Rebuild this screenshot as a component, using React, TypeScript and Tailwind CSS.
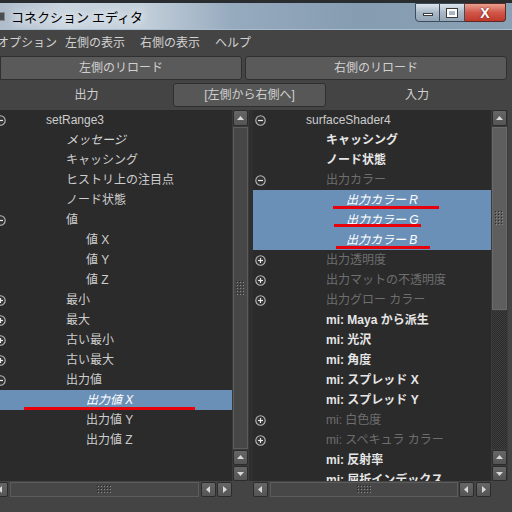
import React from "react";

type Row = {
  label: string;
  level: 0 | 1 | 2;
  icon?: "minus" | "plus";
  tone?: "normal" | "bold" | "dim" | "italic" | "sel";
  mark?: string;
};

const LEFT_ROWS: Row[] = [
  { label: "setRange3", level: 0, icon: "minus" },
  { label: "メッセージ", level: 1, tone: "italic" },
  { label: "キャッシング", level: 1 },
  { label: "ヒストリ上の注目点", level: 1 },
  { label: "ノード状態", level: 1 },
  { label: "値", level: 1, icon: "minus" },
  { label: "値 X", level: 2 },
  { label: "値 Y", level: 2 },
  { label: "値 Z", level: 2 },
  { label: "最小", level: 1, icon: "plus" },
  { label: "最大", level: 1, icon: "plus" },
  { label: "古い最小", level: 1, icon: "plus" },
  { label: "古い最大", level: 1, icon: "plus" },
  { label: "出力値", level: 1, icon: "minus" },
  { label: "出力値 X", level: 2, tone: "sel", mark: "top-[17px] left-[31px] w-[171px]" },
  { label: "出力値 Y", level: 2 },
  { label: "出力値 Z", level: 2 },
];

const RIGHT_ROWS: Row[] = [
  { label: "surfaceShader4", level: 0, icon: "minus" },
  { label: "キャッシング", level: 1, tone: "bold" },
  { label: "ノード状態", level: 1, tone: "bold" },
  { label: "出力カラー", level: 1, icon: "minus", tone: "dim" },
  { label: "出力カラー R", level: 2, tone: "sel", mark: "top-[16px] left-[80px] w-[106px]" },
  { label: "出力カラー G", level: 2, tone: "sel", mark: "top-[14px] left-[81px] w-[87px]" },
  { label: "出力カラー B", level: 2, tone: "sel", mark: "top-[16px] left-[83px] w-[94px]" },
  { label: "出力透明度", level: 1, icon: "plus", tone: "dim" },
  { label: "出力マットの不透明度", level: 1, icon: "plus", tone: "dim" },
  { label: "出力グロー カラー", level: 1, icon: "plus", tone: "dim" },
  { label: "mi: Maya から派生", level: 1, tone: "bold" },
  { label: "mi: 光沢", level: 1, tone: "bold" },
  { label: "mi: 角度", level: 1, tone: "bold" },
  { label: "mi: スプレッド X", level: 1, tone: "bold" },
  { label: "mi: スプレッド Y", level: 1, tone: "bold" },
  { label: "mi: 白色度", level: 1, icon: "plus", tone: "dim" },
  { label: "mi: スペキュラ カラー", level: 1, icon: "plus", tone: "dim" },
  { label: "mi: 反射率", level: 1, tone: "bold" },
  { label: "mi: 屈折インデックス", level: 1, tone: "bold" },
];

const INDENT = ["ml-[40px]", "ml-[60px]", "ml-[80px]"];

const TONE = {
  normal: "text-[#cdcdcd]",
  bold: "font-bold text-[#e6e6e6]",
  dim: "text-[#6e6e6e]",
  italic: "italic text-[#d6d6d6]",
  sel: "italic text-white",
};

function ExpandIcon({ kind }: { kind?: "minus" | "plus" }) {
  return (
    <div className="w-[11px] h-[11px] ml-[2px] shrink-0">
      {kind && (
        <svg viewBox="0 0 11 11" className="w-[11px] h-[11px]">
          <circle cx="5.5" cy="5.5" r="4.7" fill="#333" stroke="#b9b9b9" strokeWidth="1.1" />
          <path d="M3 5.5h5" stroke="#e8e8e8" strokeWidth="1.2" />
          {kind === "plus" && <path d="M5.5 3v5" stroke="#e8e8e8" strokeWidth="1.2" />}
        </svg>
      )}
    </div>
  );
}

function TreeRow({ row }: { row: Row }) {
  const tone = row.tone ?? "normal";
  return (
    <div
      className={`relative h-[20px] flex items-center shrink-0 ${tone === "sel" ? "bg-[#6b90b7]" : ""}`}
    >
      <ExpandIcon kind={row.icon} />
      <span className={`${INDENT[row.level]} leading-[20px] whitespace-nowrap ${TONE[tone]}`}>
        {row.label}
      </span>
      {row.mark && <div className={`absolute h-[3px] bg-[#e8000a] ${row.mark}`} />}
    </div>
  );
}

function Arrow({ dir }: { dir: "up" | "down" | "left" | "right" }) {
  const d = {
    up: "M1 6L4.5 2L8 6Z",
    down: "M1 3L4.5 7L8 3Z",
    left: "M6 1L2 4.5L6 8Z",
    right: "M3 1L7 4.5L3 8Z",
  }[dir];
  return (
    <svg viewBox="0 0 9 9" className="w-[9px] h-[9px]">
      <path d={d} fill="#d8d8d8" />
    </svg>
  );
}

function Btn({ dir, className = "" }: { dir: "up" | "down" | "left" | "right"; className?: string }) {
  return (
    <div
      className={`shrink-0 flex items-center justify-center rounded-[2px] border border-[#2c2c2c] bg-[linear-gradient(#666,#555)] ${className}`}
    >
      <Arrow dir={dir} />
    </div>
  );
}

function Grip({ vertical }: { vertical?: boolean }) {
  const cols = vertical ? 3 : 5;
  const rows = vertical ? 5 : 3;
  const dots = [];
  for (let r = 0; r < rows; r++)
    for (let c = 0; c < cols; c++) {
      dots.push(<rect key={`d${r}-${c}`} x={c * 3} y={r * 3} width="1" height="1" fill="#2a2a2a" />);
      dots.push(<rect key={`l${r}-${c}`} x={c * 3 + 1} y={r * 3 + 1} width="1" height="1" fill="#8a8a8a" />);
    }
  return (
    <svg width={cols * 3} height={rows * 3} viewBox={`0 0 ${cols * 3} ${rows * 3}`}>
      {dots}
    </svg>
  );
}

function TitleBar() {
  return (
    <div className="h-[30px] flex border-t-[3px] border-[#2a2d30] bg-[linear-gradient(90deg,#aebccb_0%,#c9d4de_12%,#c3cfda_28%,#97abbf_45%,#869cb1_70%,#8aa0b4_100%)] shadow-[inset_0_-1px_0_#a9bccd]">
      <div className="flex items-center">
        <div className="w-[6px] h-[9px] bg-[#4a4f55] border border-[#888] ml-[-1px]" />
        <span className="ml-[6px] text-[13px] text-black font-['Noto_Sans_CJK_JP',sans-serif] [text-shadow:0_0_6px_#eef2f6,0_0_10px_#eef2f6]">
          コネクション エディタ
        </span>
      </div>
      <div className="ml-auto mr-[6px] flex items-start">
        <div className="w-[25px] h-[19px] flex items-end justify-center pb-[5px] rounded-bl-[4px] border border-[#3e4b58] bg-[linear-gradient(#dde5ee,#a9b8c7_50%,#93a5b8)]">
          <div className="w-[10px] h-[3px] bg-white border border-[#3a3a3a]" />
        </div>
        <div className="w-[25px] h-[19px] flex items-center justify-center border-y border-r border-[#3e4b58] bg-[linear-gradient(#dde5ee,#a9b8c7_50%,#93a5b8)]">
          <div className="w-[10px] h-[8px] border-[2px] border-white outline outline-1 outline-[#3a3a3a]" />
        </div>
        <div className="w-[41px] h-[19px] flex items-center justify-center rounded-br-[4px] border-y border-r border-[#5a2a24] bg-[linear-gradient(#e9a08f,#d0574a_50%,#c1392b)]">
          <span className="text-white font-bold text-[14px] leading-none font-['Liberation_Sans',sans-serif] [text-shadow:0_0_2px_#5a1a14]">
            X
          </span>
        </div>
      </div>
    </div>
  );
}

function ListPanel({ rows, shift }: { rows: Row[]; shift?: boolean }) {
  return (
    <div className="flex-1 h-full bg-[#2b2b2b] overflow-hidden">
      <div className={`flex flex-col ${shift ? "-ml-[7px]" : ""}`}>
        {rows.map((r) => (
          <TreeRow key={r.label} row={r} />
        ))}
      </div>
    </div>
  );
}

export default function App() {
  return (
    <div className="w-[512px] h-[512px] overflow-hidden bg-[#444444] text-[12px] text-[#d0d0d0] font-['Liberation_Sans','Noto_Sans_CJK_JP',sans-serif]">
      <TitleBar />

      {/* menu */}
      <div className="h-[25px] flex items-center text-[12px] text-[#d2d2d2]">
        <span className="-ml-[3px]">オプション</span>
        <span className="ml-[8px]">左側の表示</span>
        <span className="ml-[15px]">右側の表示</span>
        <span className="ml-[15px]">ヘルプ</span>
      </div>

      {/* reload buttons */}
      <div className="h-[26px] flex items-center gap-[3px]">
        <div className="w-[242px] h-[24px] flex items-center justify-center rounded-r-[3px] border border-[#2f2f2f] bg-[#5a5a5a] text-[#d0d0d0]">
          左側のリロード
        </div>
        <div className="w-[262px] h-[24px] flex items-center justify-center rounded-[3px] border border-[#2f2f2f] bg-[#5a5a5a] text-[#d0d0d0]">
          右側のリロード
        </div>
      </div>

      {/* direction row */}
      <div className="h-[28px] flex items-center w-[508px]">
        <div className="w-[173px] text-center">出力</div>
        <div className="w-[153px] h-[24px] flex items-center justify-center rounded-[3px] border border-[#2f2f2f] bg-[#575757] text-[#d0d0d0]">
          [左側から右側へ]
        </div>
        <div className="flex-1 text-center">入力</div>
      </div>

      {/* panels */}
      <div className="mt-[1px] flex">
        {/* left column */}
        <div className="w-[249px] flex flex-col">
          <div className="h-[371px] flex">
            <ListPanel rows={LEFT_ROWS} shift />
            <div className="w-[17px] flex flex-col px-[1px] bg-[#3a3a3a]">
              <Btn dir="up" className="h-[16px]" />
              <div className="flex-1 my-[1px] flex items-center justify-center border border-[#5c5c5c] bg-[#474747]">
                <Grip vertical />
              </div>
              <Btn dir="up" className="h-[15px]" />
              <Btn dir="down" className="h-[15px] mt-[1px]" />
            </div>
          </div>
          <div className="h-[16px] flex items-center">
            <Btn dir="left" className="w-[15px] h-[15px] -ml-[7px]" />
            <div className="ml-[2px] w-[189px] h-[15px] flex items-center justify-center border border-[#5c5c5c] bg-[#474747]">
              <Grip />
            </div>
            <Btn dir="left" className="ml-[2px] w-[15px] h-[15px]" />
            <Btn dir="right" className="ml-[1px] w-[15px] h-[15px]" />
          </div>
        </div>

        <div className="w-[4px] bg-[#2f2f2f] h-[371px]" />

        {/* right column */}
        <div className="w-[255px] flex flex-col">
          <div className="h-[371px] flex">
            <ListPanel rows={RIGHT_ROWS} />
            <div className="w-[17px] flex flex-col px-[1px] bg-[#3a3a3a]">
              <Btn dir="up" className="h-[16px]" />
              <div className="h-[183px] my-[1px] flex items-center justify-center border border-[#6a6a6a] bg-[#5e5e5e]">
                <Grip vertical />
              </div>
              <div className="flex-1 bg-[conic-gradient(#3d3d3d_25%,#2c2c2c_0_50%,#3d3d3d_0_75%,#2c2c2c_0)] bg-[length:2px_2px]" />
              <Btn dir="up" className="h-[15px] mt-[1px]" />
              <Btn dir="down" className="h-[15px] mt-[1px]" />
            </div>
          </div>
          <div className="h-[16px] flex items-center">
            <Btn dir="left" className="w-[15px] h-[15px]" />
            <div className="ml-[2px] w-[188px] h-[15px] flex items-center justify-center border border-[#5c5c5c] bg-[#474747]">
              <Grip />
            </div>
            <Btn dir="left" className="ml-[1px] w-[15px] h-[15px]" />
            <Btn dir="right" className="ml-[2px] w-[15px] h-[15px]" />
          </div>
        </div>
      </div>
    </div>
  );
}
